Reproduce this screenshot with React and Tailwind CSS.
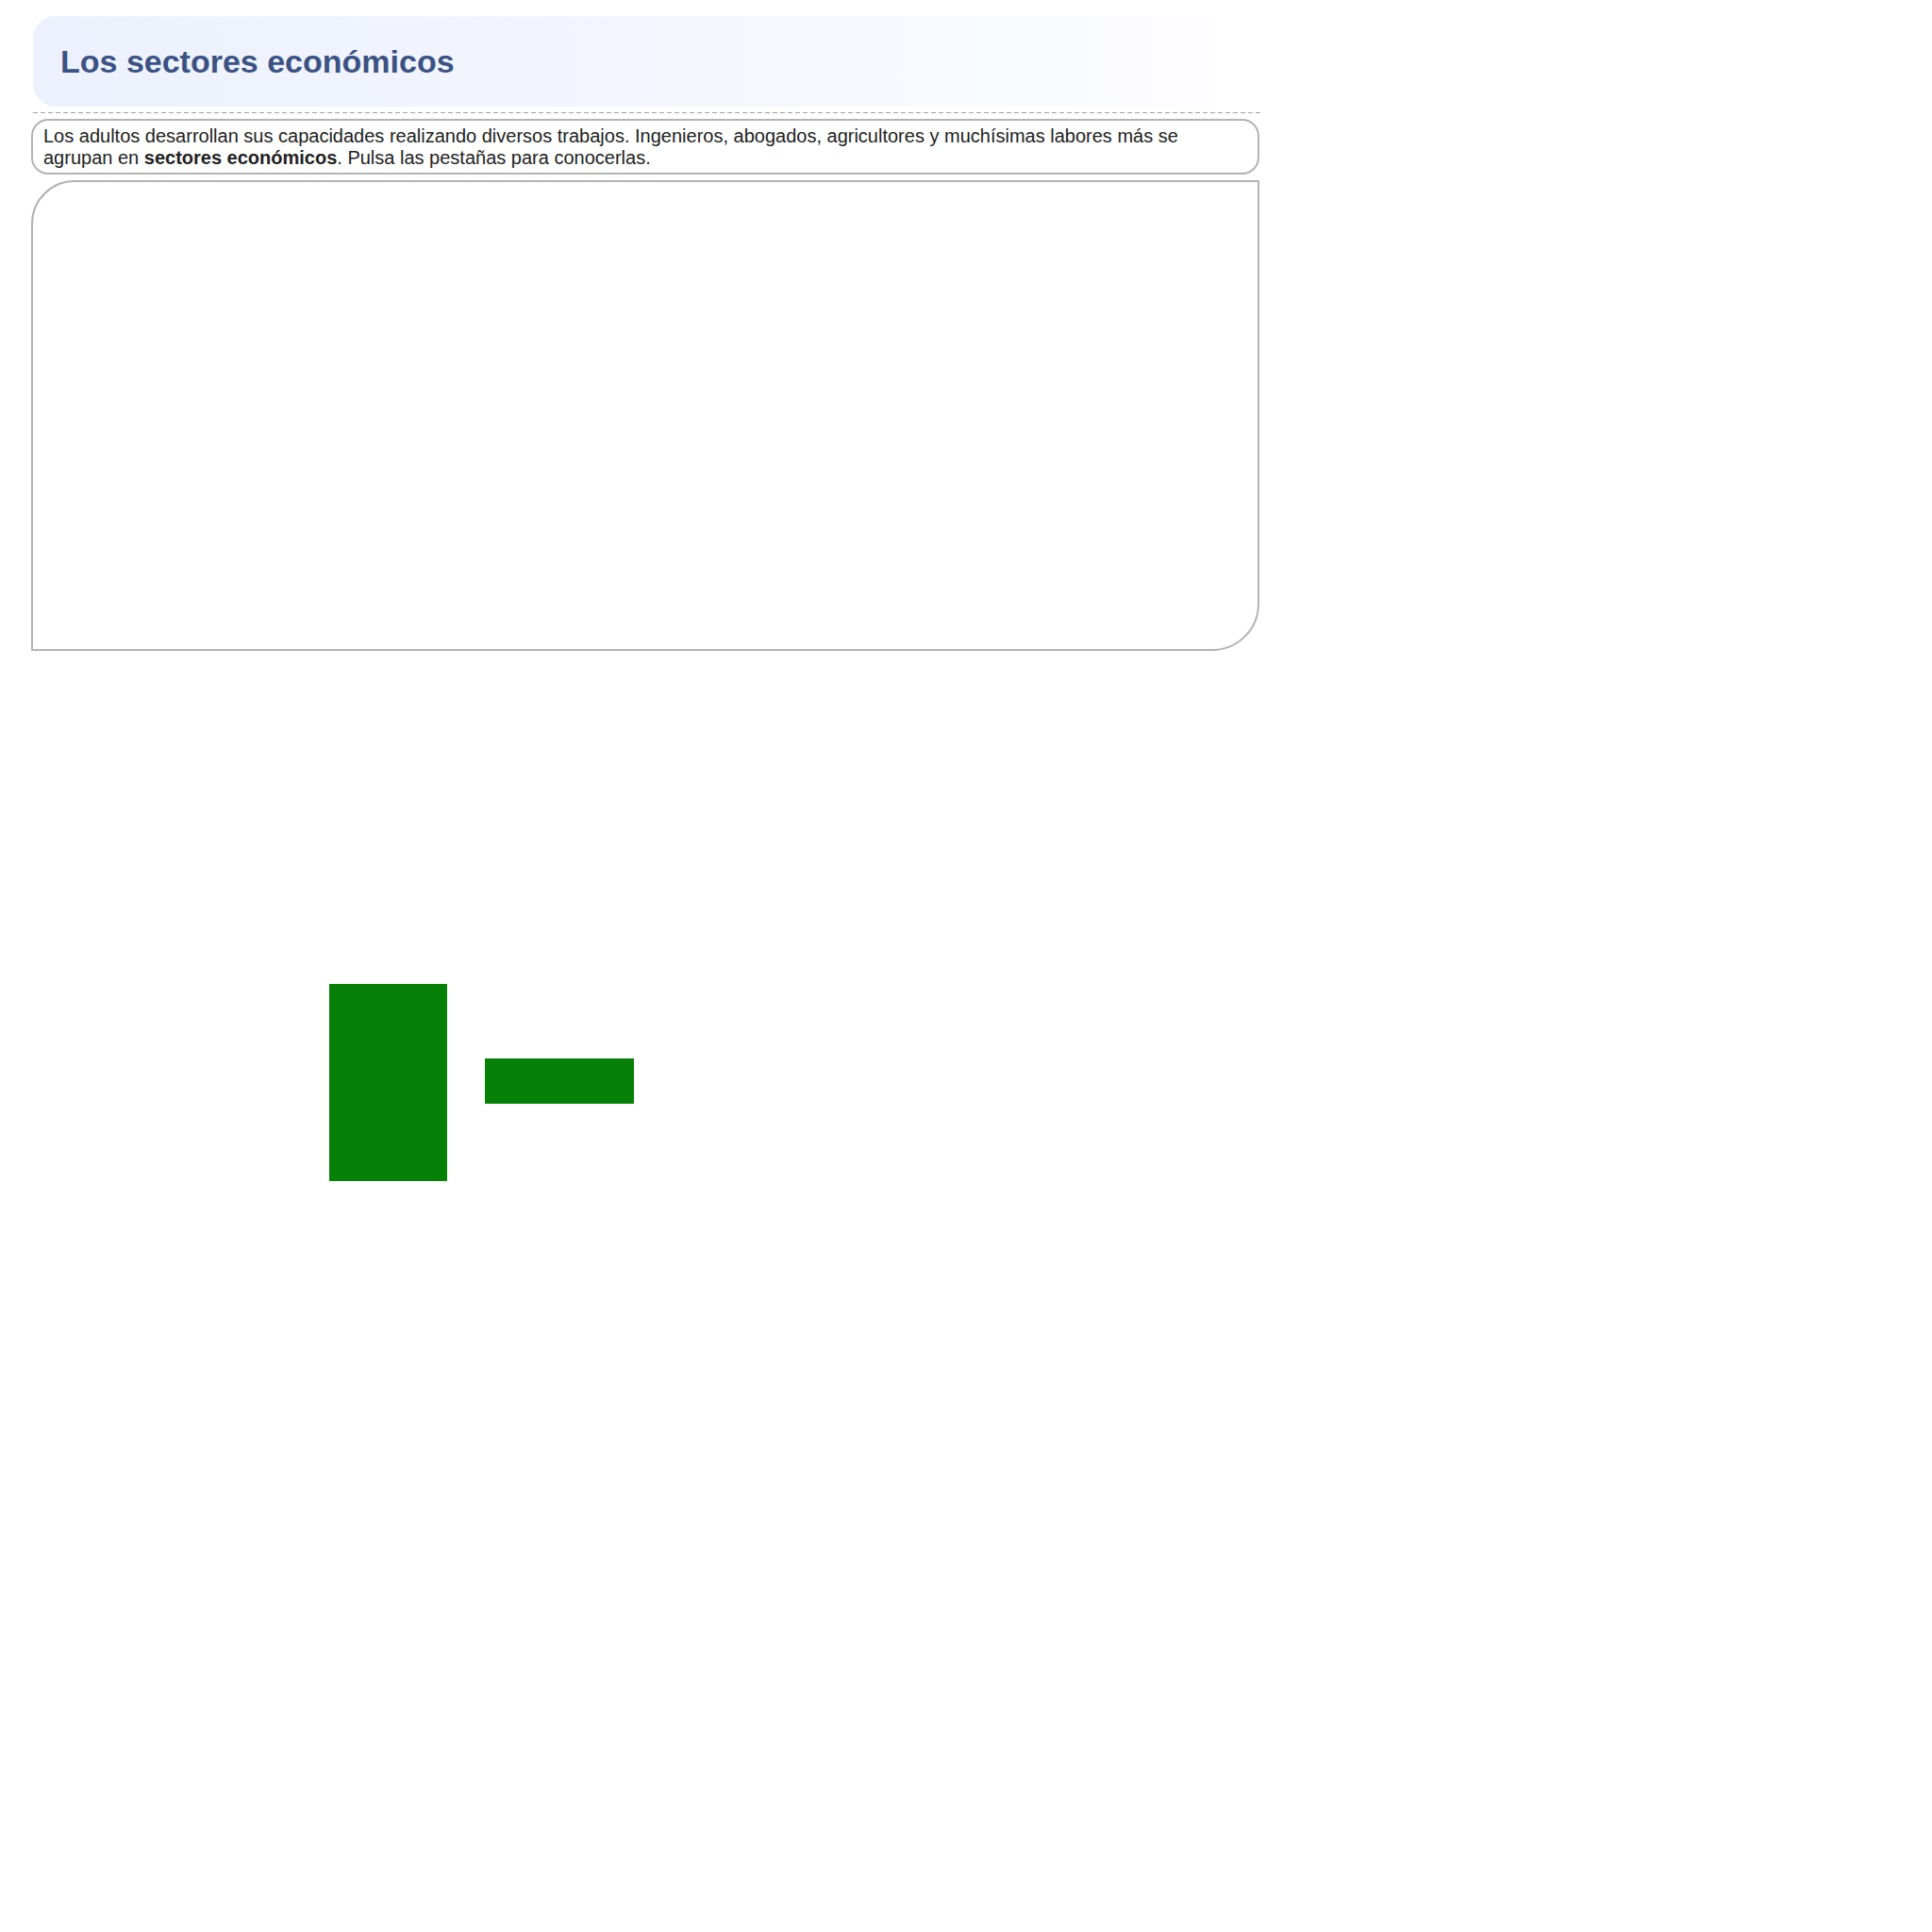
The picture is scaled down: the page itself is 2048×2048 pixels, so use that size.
import React from 'react';

export default function App() {
  return (
    <div className="min-h-screen bg-white font-['Liberation_Sans',Arial,sans-serif]">
      <div className="w-[1302px] pl-0 pt-[17px] ml-[33px]">
        <header className="ml-[2px] flex h-[96px] w-[1247px] items-center rounded-[24px] rounded-r-none bg-gradient-to-r from-[#edf1fd] via-[#f3f6fe] to-[#fdfdff] pl-[29px]">
          <h1 className="text-[34px] font-bold leading-none text-[#3b5283]">Los sectores económicos</h1>
        </header>

        <div className="ml-[2px] mt-[6px] h-px w-[1301px] bg-[repeating-linear-gradient(to_right,#9ca1b1_0px,#9ca1b1_5px,transparent_5px,transparent_8px)]" />

        <section className="mt-[6px] rounded-[18px] border-2 border-[#b3b3b3] px-[11px] pt-[5px] pb-[4px] text-[20px] leading-[23px] text-[#222]">
          Los adultos desarrollan sus capacidades realizando diversos trabajos. Ingenieros, abogados, agricultores y muchísimas labores más se
          agrupan en <strong className="font-bold">sectores económicos</strong>. Pulsa las pestañas para conocerlas.
        </section>

        <section className="mt-[6px] h-[499px] rounded-tl-[46px] rounded-br-[50px] border-2 border-[#b3b3b3]" />

        <div className="ml-[316px] mt-[353px] flex items-start gap-[40px]">
          <div className="h-[209px] w-[125px] bg-[#078007]" />
          <div className="mt-[79px] h-[48px] w-[158px] bg-[#078007]" />
        </div>
      </div>
    </div>
  );
}
